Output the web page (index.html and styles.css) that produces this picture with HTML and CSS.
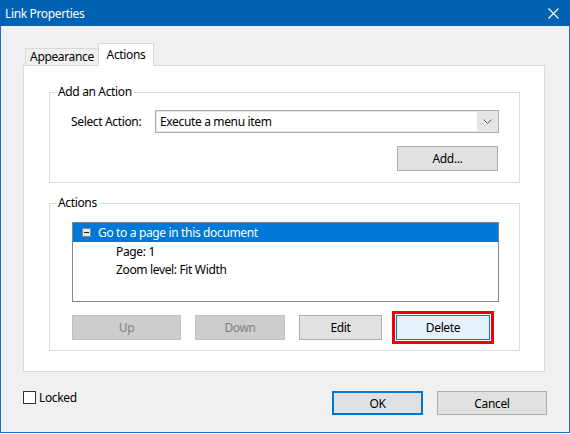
FILE: index.html
```html
<!DOCTYPE html>
<html>
<head>
<meta charset="utf-8">
<link rel="stylesheet" href="styles.css">
</head>
<body>
<div class="window">
  <div class="titlebar">
    <span class="title">Link Properties</span>
    <svg class="close" width="11" height="11" viewBox="0 0 11 11"><path d="M0.5 0.5 L10.5 10.5 M10.5 0.5 L0.5 10.5" stroke="#fff" stroke-width="1.1" fill="none"/></svg>
  </div>
  <div class="content">
    <div class="tabs">
      <div class="tab">Appearance</div>
      <div class="tab active">Actions</div>
    </div>
    <div class="panel">
      <div class="group group-add">
        <span class="legend">Add an Action</span>
        <div class="row">
          <span class="label">Select Action:</span>
          <div class="combo">
            <div class="combo-field">Execute a menu item</div>
            <div class="combo-arrow"><svg width="9" height="5" viewBox="0 0 9 5"><path d="M0.5 0.5 L4.5 4.5 L8.5 0.5" stroke="#555" stroke-width="1" fill="none"/></svg></div>
          </div>
        </div>
        <div class="row right">
          <button class="btn add">Add...</button>
        </div>
      </div>
      <div class="group group-actions">
        <span class="legend">Actions</span>
        <div class="list">
          <div class="item selected">
            <svg class="minus" width="9" height="9" viewBox="0 0 9 9"><rect x="0.5" y="0.5" width="8" height="8" fill="#e8e8e8" stroke="#8a8a8a"/><path d="M2 4.5 H7" stroke="#222" stroke-width="1"/></svg>
            <span>Go to a page in this document</span>
          </div>
          <div class="item sub">Page: 1</div>
          <div class="item sub">Zoom level: Fit Width</div>
        </div>
        <div class="buttons">
          <button class="btn disabled up">Up</button>
          <button class="btn disabled down">Down</button>
          <button class="btn edit">Edit</button>
          <button class="btn delete">Delete</button>
        </div>
      </div>
    </div>
    <div class="footer">
      <label class="check"><span class="box"></span><span>Locked</span></label>
      <div class="footer-buttons">
        <button class="btn ok">OK</button>
        <button class="btn cancel">Cancel</button>
      </div>
    </div>
  </div>
</div>
</body>
</html>
```
FILE: styles.css
```css
* { box-sizing: border-box; }
html, body { margin: 0; padding: 0; }
body {
  width: 570px;
  height: 434px;
  background: #ffffff;
  font-family: "Noto Sans", "DejaVu Sans", sans-serif;
  font-size: 12px;
  letter-spacing: -0.35px;
  color: #000;
}
.window {
  width: 570px;
  height: 433px;
  background: #f0f0f0;
  border: 1px solid #1a72c6;
  border-top: none;
  display: flex;
  flex-direction: column;
}
.titlebar {
  height: 26px;
  margin: 0 -1px;
  background: #0063b1;
  color: #fff;
  display: flex;
  align-items: center;
  justify-content: space-between;
  padding: 0 11px 0 5px;
  font-size: 12px;
}
.close { display: block; }
.content {
  padding: 17px 0 0 22px;
}
.tabs {
  display: flex;
  align-items: flex-end;
  height: 22px;
  padding-left: 2px;
}
.tab {
  width: 73px;
  height: 17px;
  border: 1px solid #d9d9d9;
  border-bottom: none;
  border-right: none;
  background: #f0f0f0;
  display: flex;
  align-items: center;
  justify-content: center;
  line-height: 1;
}
.tab.active {
  width: 56px;
  height: 23px;
  margin-bottom: -1px;
  background: #fff;
  border-right: 1px solid #d9d9d9;
  position: relative;
  z-index: 1;
  padding-bottom: 1px;
}
.panel {
  width: 522px;
  height: 307px;
  background: #fff;
  border: 1px solid #d9d9d9;
  padding: 26px 24px 0 25px;
}
.group {
  position: relative;
  border: 1px solid #dcdcdc;
}
.legend {
  position: absolute;
  left: 6px;
  top: -10px;
  padding: 0 2px;
  background: #fff;
  line-height: 18px;
}
.group-add {
  height: 91px;
  padding: 17px 20px 0 21px;
}
.row { display: flex; align-items: center; }
.row.right { justify-content: flex-end; margin-top: 13px; padding-right: 1px; }
.label { width: 84px; }
.combo {
  width: 344px;
  height: 23px;
  border: 1px solid #adadad;
  background: #e5e5e5;
  display: flex;
  padding: 1px;
}
.combo-field {
  flex: 1;
  background: #fff;
  padding-left: 3px;
  display: flex;
  align-items: center;
}
.combo-arrow {
  width: 20px;
  display: flex;
  align-items: center;
  justify-content: center;
}
.combo-arrow svg { display: block; }
.btn {
  font-family: inherit;
  font-size: 12px;
  letter-spacing: -0.35px;
  color: #000;
  background: #e1e1e1;
  border: 1px solid #adadad;
  height: 25px;
  padding: 0;
  margin: 0;
}
.add { width: 101px; }
.group-actions {
  margin-top: 20px;
  height: 148px;
  padding: 18px 0 0 22px;
}
.list {
  width: 427px;
  height: 80px;
  border: 1px solid #828790;
  background: #fff;
}
.item {
  height: 18px;
  display: flex;
  align-items: center;
}
.item.selected {
  height: 19px;
  background: #0078d7;
  color: #fff;
  padding-left: 9px;
}
.minus { display: block; margin-right: 7px; }
.item.sub { padding-left: 43px; }
.buttons {
  display: flex;
  gap: 14px;
  margin-top: 13px;
}
.up { width: 109px; }
.down { width: 90px; }
.edit { width: 83px; }
.delete {
  width: 94px;
  background: #e5f1fb;
  border-color: #0078d7;
  outline: 3px solid #f00000;
  outline-offset: 1px;
}
.btn.disabled {
  background: #cccccc;
  border-color: #bfbfbf;
  color: #838383;
}
.footer {
  display: flex;
  justify-content: space-between;
  align-items: flex-start;
  margin-top: 19px;
  width: 524px;
}
.check {
  display: flex;
  align-items: center;
  height: 13px;
}
.box {
  width: 13px;
  height: 13px;
  border: 1px solid #333;
  background: #fff;
  margin-right: 3px;
}
.footer-buttons { display: flex; gap: 14px; }
.ok {
  width: 91px;
  height: 24px;
  border: 2px solid #0078d7;
}
.cancel {
  width: 110px;
  height: 24px;
}
```
